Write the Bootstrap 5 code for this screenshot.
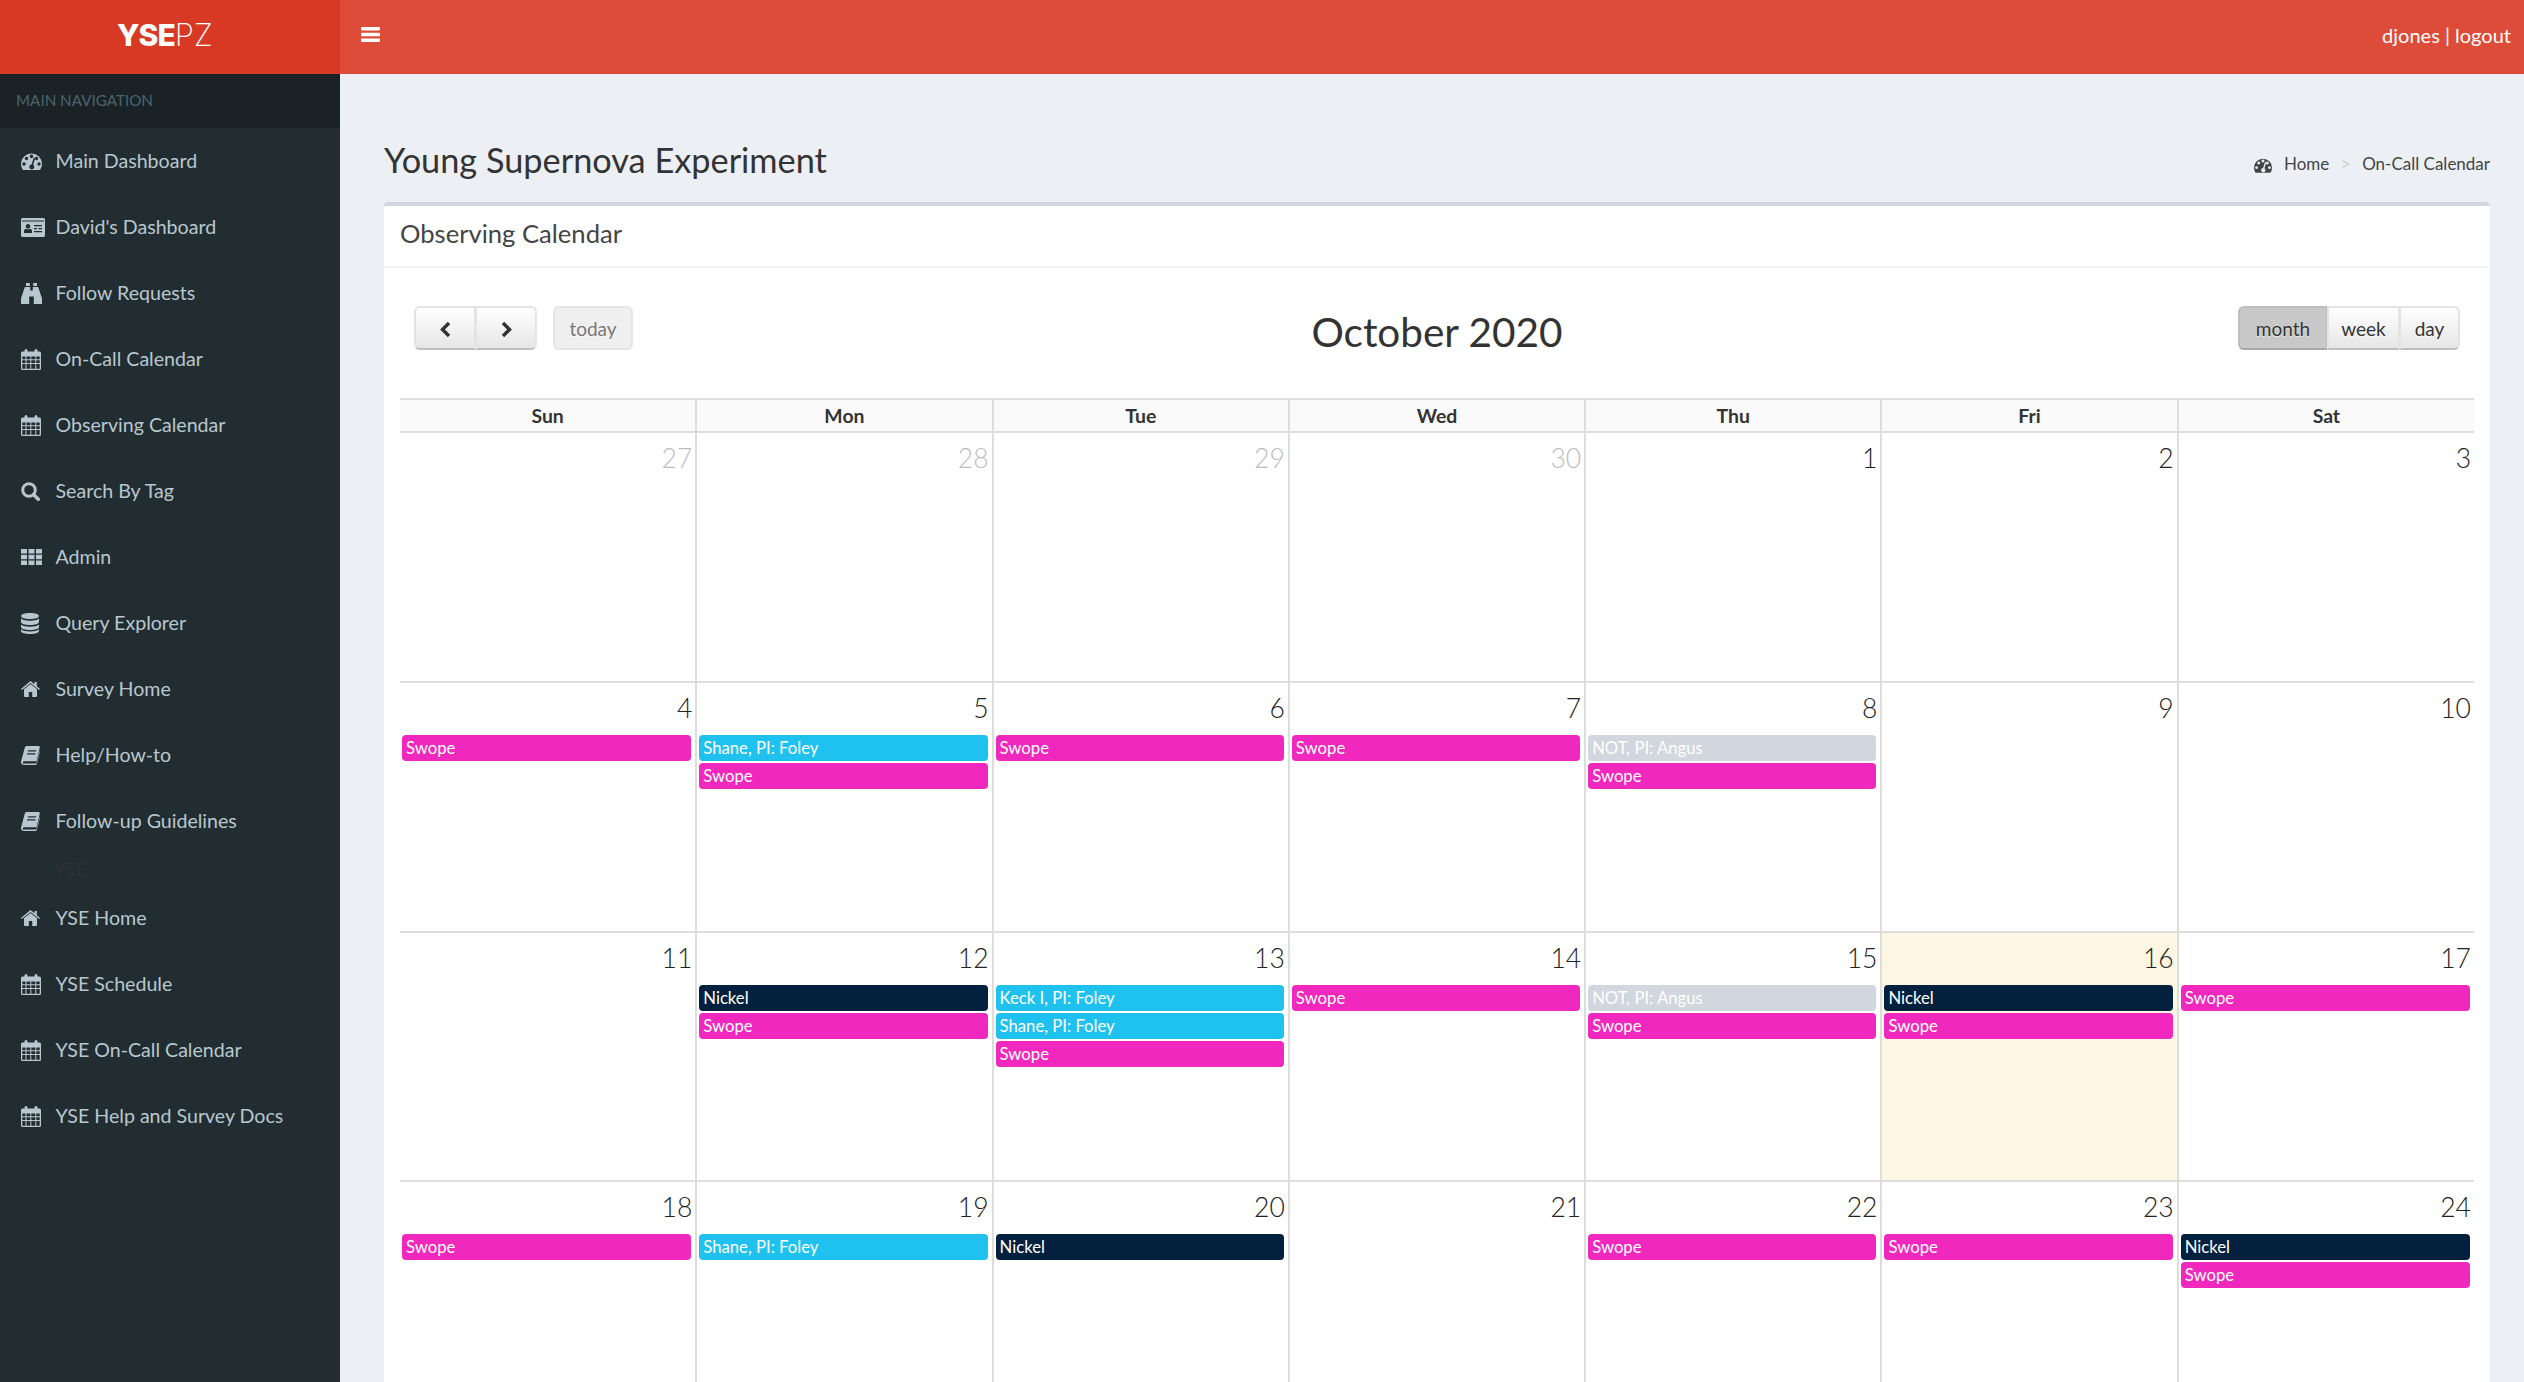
<!DOCTYPE html>
<html lang="en">
<head>
<meta charset="utf-8">
<title>YSE PZ - Observing Calendar</title>
<link href="https://cdn.jsdelivr.net/npm/bootstrap@5.3.0/dist/css/bootstrap.min.css" rel="stylesheet">
<style>
html,body{height:100%;overflow:hidden}
body{font-family:"Lato","Liberation Sans",sans-serif;font-size:20px;color:#333;background:#ecf0f5}
.top-bar{height:74px}
.brand-box{width:340px;padding:0 10px 5px 0;background:#d73925;color:#fff;font-family:"Inter","Liberation Sans",sans-serif;font-size:30px;letter-spacing:-1px;line-height:1}
.brand-box b{font-weight:800}
.brand-box span{font-weight:200;font-size:31px;letter-spacing:0}
.head-fill{background:#dd4b39;color:#fff;padding-bottom:5px}
.burger{width:19px;height:15px;margin-left:21px}
.user-links{font-size:20px;padding-right:13px}
.user-links a{color:#fff;text-decoration:none}
.shell{height:calc(100vh - 74px)}
.side{width:340px;background:#222d32;color:#b8c7ce}
.side-head{height:54px;background:#1a2226;color:#4b646f;font-size:15.2px;padding:0 0 2px 16px}
.side .nav-link{height:66px;padding:0 0 0 21px;color:#b8c7ce;font-size:19.6px;display:flex;align-items:center}
.side .nav-link svg{flex:none}
.ico-slot{width:34.5px;flex:none;display:flex}
.side-yse{height:31px;padding-left:54px;color:#2d3236;font-size:19px;line-height:30px}
.main-pane{min-width:0}
.page-head{height:128px;padding:32px 34px 0 44px}
.page-head h1{font-size:34.3px;font-weight:400;margin:12px 0 0;color:#333}
.crumbs{margin:20px 0 0;padding:0;font-size:17px;--bs-breadcrumb-divider:">";--bs-breadcrumb-margin-bottom:0;--bs-breadcrumb-item-padding-x:11.5px;--bs-breadcrumb-divider-color:#ccc}
.crumbs a{color:#444;text-decoration:none}
.crumbs .active{color:#444}
.obs-box{margin:0 34px 0 44px;border:0;border-top:4px solid #d2d6de;border-radius:4px;background:#fff}
.obs-head{height:62px;padding:0 16px 6px;border-bottom:2px solid #f4f4f4;background:#fff;font-size:25.6px;display:flex;align-items:center;color:#444}
.obs-body{padding:38px 16px 0}
.tool-side{flex:1 1 0;padding:0 14px}
.tool-row{height:92px}
.cal-title{font-size:40.5px;line-height:50px;font-weight:400;margin:1px 0 0;color:#333}
.fc-b{height:44px;padding:0 14px;font-size:19px;color:#333;background:linear-gradient(#fff,#e6e6e6);border:2px solid #e4e4e4;border-bottom-color:#bfbfbf;border-radius:6px;text-shadow:0 1px 1px rgba(255,255,255,.75);line-height:1;--bs-btn-hover-bg:#e6e6e6}
.fc-arrow{width:62px;padding:0}
.fc-dim{background:#efefef;color:#777;width:80px;padding:0;opacity:1;border-color:#e4e4e4}
.fc-on{background:#c8c8c8;border-color:#bdbdbd #bdbdbd #a8a8a8;width:90px;padding:0}
.fc-wk{width:73px;padding:0}
.fc-dy{width:61px;padding:0}
.cal-table{table-layout:fixed;width:100%;margin:0;border-collapse:collapse;--bs-table-bg:transparent}
.cal-table th{height:33px;padding:0;text-align:center;vertical-align:middle;font-size:19.4px;font-weight:700;background:#fafafa;color:#333;border:2px solid #ddd;line-height:1}
.cal-table td{height:249.6px;padding:0;vertical-align:top;border:2px solid #ddd}
.cal-table tr>:first-child{border-left:0}
.cal-table tr>:last-child{border-right:0}
.cal-table tbody tr:first-child td{height:250px}
.dnum{height:52px;padding:0 3px 0 0;text-align:right;font-size:26.5px;font-weight:300;line-height:50px;color:#222}
.dnum-off{color:#bdbdbd}
.cal-table td.cal-today{background:#fdf6e3}
.ev{display:block;height:26px;margin:0 4px 2px 2px;padding:0 4px;border-radius:4px;color:#fff;font-size:16.7px;line-height:26px;white-space:nowrap;overflow:hidden}
.ev-sw{background:#f028bd}
.ev-sh{background:#1fc2ef}
.ev-ni{background:#03203f}
.ev-no{background:#d2d6de}
</style>
</head>
<body>
<svg width="0" height="0" class="position-absolute">
<defs>
<symbol id="i-gauge" viewBox="0 0 21 17"><path fill="currentColor" fill-rule="evenodd" d="M2 17Q0 14.500 0 11A10.500 10.500 0 0 1 21 11Q21 14.500 19 17ZM3 9.300a1.700 1.700 0 1 0 .01 0ZM5.500 3.800a1.700 1.700 0 1 0 .01 0ZM10.500 1.600a1.700 1.700 0 1 0 .01 0ZM15.500 3.800a1.700 1.700 0 1 0 .01 0ZM18 9.300a1.700 1.700 0 1 0 .01 0ZM12.800 4.500 10.600 11.400a2.500 2.500 0 1 0 1.600.4L14.300 5Z"/></symbol>
<symbol id="i-card" viewBox="0 0 24 19"><path fill="currentColor" fill-rule="evenodd" d="M1.500 0h21A1.500 1.500 0 0 1 24 1.500v16a1.500 1.500 0 0 1-1.500 1.500h-21A1.500 1.500 0 0 1 0 17.500v-16A1.500 1.500 0 0 1 1.500 0ZM1 2.500v1h22v-1ZM7 6a2.300 2.300 0 1 0 .01 0ZM3 15h8v-2q0-2-2-2.300L7 11.500l-2-.8q-2 .3-2 2.300ZM13 7v1.300h8V7ZM13 10v1.300h3V10ZM17.500 10v1.300H21V10ZM13 13v1.300h8V13Z"/></symbol>
<symbol id="i-bino" viewBox="0 0 21 21"><path fill="currentColor" d="M5 0h3.800v3H5ZM12.200 0H16v3h-3.800ZM3.800 4h5.400v3.500h2.600V4h5.400L21 15.500V21h-8.200v-7.500H8.200V21H0v-5.500Z"/></symbol>
<symbol id="i-cal" viewBox="0 0 20 21"><path fill="currentColor" fill-rule="evenodd" d="M3.500 2.500V1.500a1.500 1.500 0 0 1 3 0V2.500h7V1.500a1.500 1.500 0 0 1 3 0V2.500h2A1.500 1.500 0 0 1 20 4V19.500A1.500 1.500 0 0 1 18.500 21h-17A1.500 1.500 0 0 1 0 19.500V4A1.500 1.500 0 0 1 1.500 2.500ZM1.300 7.600V10.300H4.500V7.600ZM5.500 7.600V10.300H9.300V7.600ZM10.300 7.600V10.300H14.300V7.600ZM15.300 7.600V10.300H18.700V7.600ZM1.300 11.300V14H4.500V11.300ZM5.500 11.300V14H9.300V11.300ZM10.300 11.300V14H14.300V11.300ZM15.300 11.300V14H18.700V11.300ZM1.300 15V19.700H4.500V15ZM5.500 15V19.700H9.300V15ZM10.300 15V19.700H14.300V15ZM15.300 15V19.700H18.700V15Z"/></symbol>
<symbol id="i-search" viewBox="0 0 19 19"><circle cx="8" cy="8" r="6.300" fill="none" stroke="currentColor" stroke-width="3"/><path d="M12.500 12.500 17.300 17.300" stroke="currentColor" stroke-width="3.400" stroke-linecap="round"/></symbol>
<symbol id="i-th" viewBox="0 0 21 16"><path fill="currentColor" d="M0 0h6v4.500H0ZM7.500 0h6v4.500h-6ZM15 0h6v4.500h-6ZM0 5.800h6v4.500H0ZM7.500 5.800h6v4.500h-6ZM15 5.800h6v4.500h-6ZM0 11.500h6V16H0ZM7.500 11.500h6V16h-6ZM15 11.500h6V16h-6Z"/></symbol>
<symbol id="i-db" viewBox="0 0 18 21"><path fill="currentColor" d="M9 0c5 0 9 1.300 9 3s-4 3-9 3-9-1.300-9-3 4-3 9-3ZM0 5.500C1.500 7 5 7.700 9 7.700s7.500-.7 9-2.200V9c0 1.700-4 3-9 3S0 10.700 0 9ZM0 11.500c1.500 1.500 5 2.200 9 2.200s7.500-.7 9-2.200V14c0 1.700-4 3-9 3s-9-1.300-9-3ZM0 16.300c1.500 1.500 5 2.200 9 2.200s7.500-.7 9-2.200V18c0 1.700-4 3-9 3s-9-1.300-9-3Z"/></symbol>
<symbol id="i-home" viewBox="0 0 19 16"><path fill="currentColor" d="M9.500 3 16 8.300V15a1 1 0 0 1-1 1h-3.800v-5H7.800v5H4a1 1 0 0 1-1-1V8.300Z"/><path fill="currentColor" d="M9.500 0 13.500 3.300V1h2.300v4.200L19 7.900l-.9 1.100-8.600-7-8.600 7L0 7.900Z"/></symbol>
<symbol id="i-book" viewBox="0 0 19 19"><path fill="currentColor" fill-rule="evenodd" d="M5.500 0H17.500Q19 0 18.800 1.500L15.500 15.200H3.400Q1.700 15.200 2 17T3.400 17.600H15.400L18.700 4.700 19 5.500 15.800 18Q15.500 19 14.500 19H3Q-.5 19 .2 15L3.800 1.500Q4.100 0 5.500 0ZM7 4.300 6.700 5.500H15L15.300 4.300ZM6.200 7.300 5.900 8.500H14.300L14.600 7.300Z"/></symbol>
</defs>
</svg>

<header class="top-bar d-flex">
  <a class="brand-box d-flex align-items-center justify-content-center text-decoration-none"><b>YSE</b><span>PZ</span></a>
  <nav class="head-fill flex-grow-1 d-flex align-items-center justify-content-between">
    <svg class="burger" viewBox="0 0 19 15"><path fill="#fff" d="M1 0h17a1 1 0 0 1 1 1v1.500a1 1 0 0 1-1 1H1a1 1 0 0 1-1-1V1a1 1 0 0 1 1-1ZM1 5.700h17a1 1 0 0 1 1 1v1.600a1 1 0 0 1-1 1H1a1 1 0 0 1-1-1V6.700a1 1 0 0 1 1-1ZM1 11.500h17a1 1 0 0 1 1 1V14a1 1 0 0 1-1 1H1a1 1 0 0 1-1-1v-1.500a1 1 0 0 1 1-1Z"/></svg>
    <div class="user-links"><a href="#">djones</a> | <a href="#">logout</a></div>
  </nav>
</header>

<div class="shell d-flex">
  <aside class="side flex-shrink-0">
    <div class="side-head d-flex align-items-center">MAIN NAVIGATION</div>
    <nav class="nav flex-column">
      <a class="nav-link" href="#"><span class="ico-slot"><svg width="21" height="17"><use href="#i-gauge"/></svg></span>Main Dashboard</a>
      <a class="nav-link" href="#"><span class="ico-slot"><svg width="24" height="19"><use href="#i-card"/></svg></span>David's Dashboard</a>
      <a class="nav-link" href="#"><span class="ico-slot"><svg width="21" height="21"><use href="#i-bino"/></svg></span>Follow Requests</a>
      <a class="nav-link" href="#"><span class="ico-slot"><svg width="20" height="21"><use href="#i-cal"/></svg></span>On-Call Calendar</a>
      <a class="nav-link" href="#"><span class="ico-slot"><svg width="20" height="21"><use href="#i-cal"/></svg></span>Observing Calendar</a>
      <a class="nav-link" href="#"><span class="ico-slot"><svg width="19" height="19"><use href="#i-search"/></svg></span>Search By Tag</a>
      <a class="nav-link" href="#"><span class="ico-slot"><svg width="21" height="16"><use href="#i-th"/></svg></span>Admin</a>
      <a class="nav-link" href="#"><span class="ico-slot"><svg width="18" height="21"><use href="#i-db"/></svg></span>Query Explorer</a>
      <a class="nav-link" href="#"><span class="ico-slot"><svg width="19" height="16"><use href="#i-home"/></svg></span>Survey Home</a>
      <a class="nav-link" href="#"><span class="ico-slot"><svg width="19" height="19"><use href="#i-book"/></svg></span>Help/How-to</a>
      <a class="nav-link" href="#"><span class="ico-slot"><svg width="19" height="19"><use href="#i-book"/></svg></span>Follow-up Guidelines</a>
      <div class="side-yse">YSE</div>
      <a class="nav-link" href="#"><span class="ico-slot"><svg width="19" height="16"><use href="#i-home"/></svg></span>YSE Home</a>
      <a class="nav-link" href="#"><span class="ico-slot"><svg width="20" height="21"><use href="#i-cal"/></svg></span>YSE Schedule</a>
      <a class="nav-link" href="#"><span class="ico-slot"><svg width="20" height="21"><use href="#i-cal"/></svg></span>YSE On-Call Calendar</a>
      <a class="nav-link" href="#"><span class="ico-slot"><svg width="20" height="21"><use href="#i-cal"/></svg></span>YSE Help and Survey Docs</a>
    </nav>
  </aside>

  <main class="main-pane flex-grow-1">
    <div class="page-head d-flex justify-content-between align-items-center">
      <h1>Young Supernova Experiment</h1>
      <ol class="breadcrumb crumbs align-items-center">
        <li class="breadcrumb-item"><a href="#"><svg width="18" height="15" class="me-2"><use href="#i-gauge"/></svg> Home</a></li>
        <li class="breadcrumb-item active">On-Call Calendar</li>
      </ol>
    </div>
    <section class="card obs-box">
      <div class="card-header obs-head">Observing Calendar</div>
      <div class="card-body obs-body">
        <div class="tool-row d-flex align-items-start">
          <div class="tool-side d-flex">
            <div class="btn-group">
              <button class="btn fc-b fc-arrow" aria-label="previous"><svg width="13" height="17" viewBox="0 0 13 17"><path d="M10 2 3.500 8.500 10 15" fill="none" stroke="#333" stroke-width="3.400"/></svg></button>
              <button class="btn fc-b fc-arrow" aria-label="next"><svg width="13" height="17" viewBox="0 0 13 17"><path d="M3 2 9.500 8.500 3 15" fill="none" stroke="#333" stroke-width="3.400"/></svg></button>
            </div>
            <button class="btn fc-b fc-dim ms-3">today</button>
          </div>
          <h2 class="cal-title">October 2020</h2>
          <div class="tool-side d-flex justify-content-end">
            <div class="btn-group">
              <button class="btn fc-b fc-on">month</button>
              <button class="btn fc-b fc-wk">week</button>
              <button class="btn fc-b fc-dy">day</button>
            </div>
          </div>
        </div>
        <table class="table cal-table">
          <thead><tr><th>Sun</th><th>Mon</th><th>Tue</th><th>Wed</th><th>Thu</th><th>Fri</th><th>Sat</th></tr></thead>
          <tbody>
            <tr>
              <td><div class="dnum dnum-off">27</div></td>
              <td><div class="dnum dnum-off">28</div></td>
              <td><div class="dnum dnum-off">29</div></td>
              <td><div class="dnum dnum-off">30</div></td>
              <td><div class="dnum">1</div></td>
              <td><div class="dnum">2</div></td>
              <td><div class="dnum">3</div></td>
            </tr>
            <tr>
              <td><div class="dnum">4</div><span class="ev ev-sw">Swope</span></td>
              <td><div class="dnum">5</div><span class="ev ev-sh">Shane, PI: Foley</span><span class="ev ev-sw">Swope</span></td>
              <td><div class="dnum">6</div><span class="ev ev-sw">Swope</span></td>
              <td><div class="dnum">7</div><span class="ev ev-sw">Swope</span></td>
              <td><div class="dnum">8</div><span class="ev ev-no">NOT, PI: Angus</span><span class="ev ev-sw">Swope</span></td>
              <td><div class="dnum">9</div></td>
              <td><div class="dnum">10</div></td>
            </tr>
            <tr>
              <td><div class="dnum">11</div></td>
              <td><div class="dnum">12</div><span class="ev ev-ni">Nickel</span><span class="ev ev-sw">Swope</span></td>
              <td><div class="dnum">13</div><span class="ev ev-sh">Keck I, PI: Foley</span><span class="ev ev-sh">Shane, PI: Foley</span><span class="ev ev-sw">Swope</span></td>
              <td><div class="dnum">14</div><span class="ev ev-sw">Swope</span></td>
              <td><div class="dnum">15</div><span class="ev ev-no">NOT, PI: Angus</span><span class="ev ev-sw">Swope</span></td>
              <td class="cal-today"><div class="dnum">16</div><span class="ev ev-ni">Nickel</span><span class="ev ev-sw">Swope</span></td>
              <td><div class="dnum">17</div><span class="ev ev-sw">Swope</span></td>
            </tr>
            <tr>
              <td><div class="dnum">18</div><span class="ev ev-sw">Swope</span></td>
              <td><div class="dnum">19</div><span class="ev ev-sh">Shane, PI: Foley</span></td>
              <td><div class="dnum">20</div><span class="ev ev-ni">Nickel</span></td>
              <td><div class="dnum">21</div></td>
              <td><div class="dnum">22</div><span class="ev ev-sw">Swope</span></td>
              <td><div class="dnum">23</div><span class="ev ev-sw">Swope</span></td>
              <td><div class="dnum">24</div><span class="ev ev-ni">Nickel</span><span class="ev ev-sw">Swope</span></td>
            </tr>
          </tbody>
        </table>
      </div>
    </section>
  </main>
</div>
<script src="https://cdn.jsdelivr.net/npm/bootstrap@5.3.0/dist/js/bootstrap.bundle.min.js"></script>
</body>
</html>
